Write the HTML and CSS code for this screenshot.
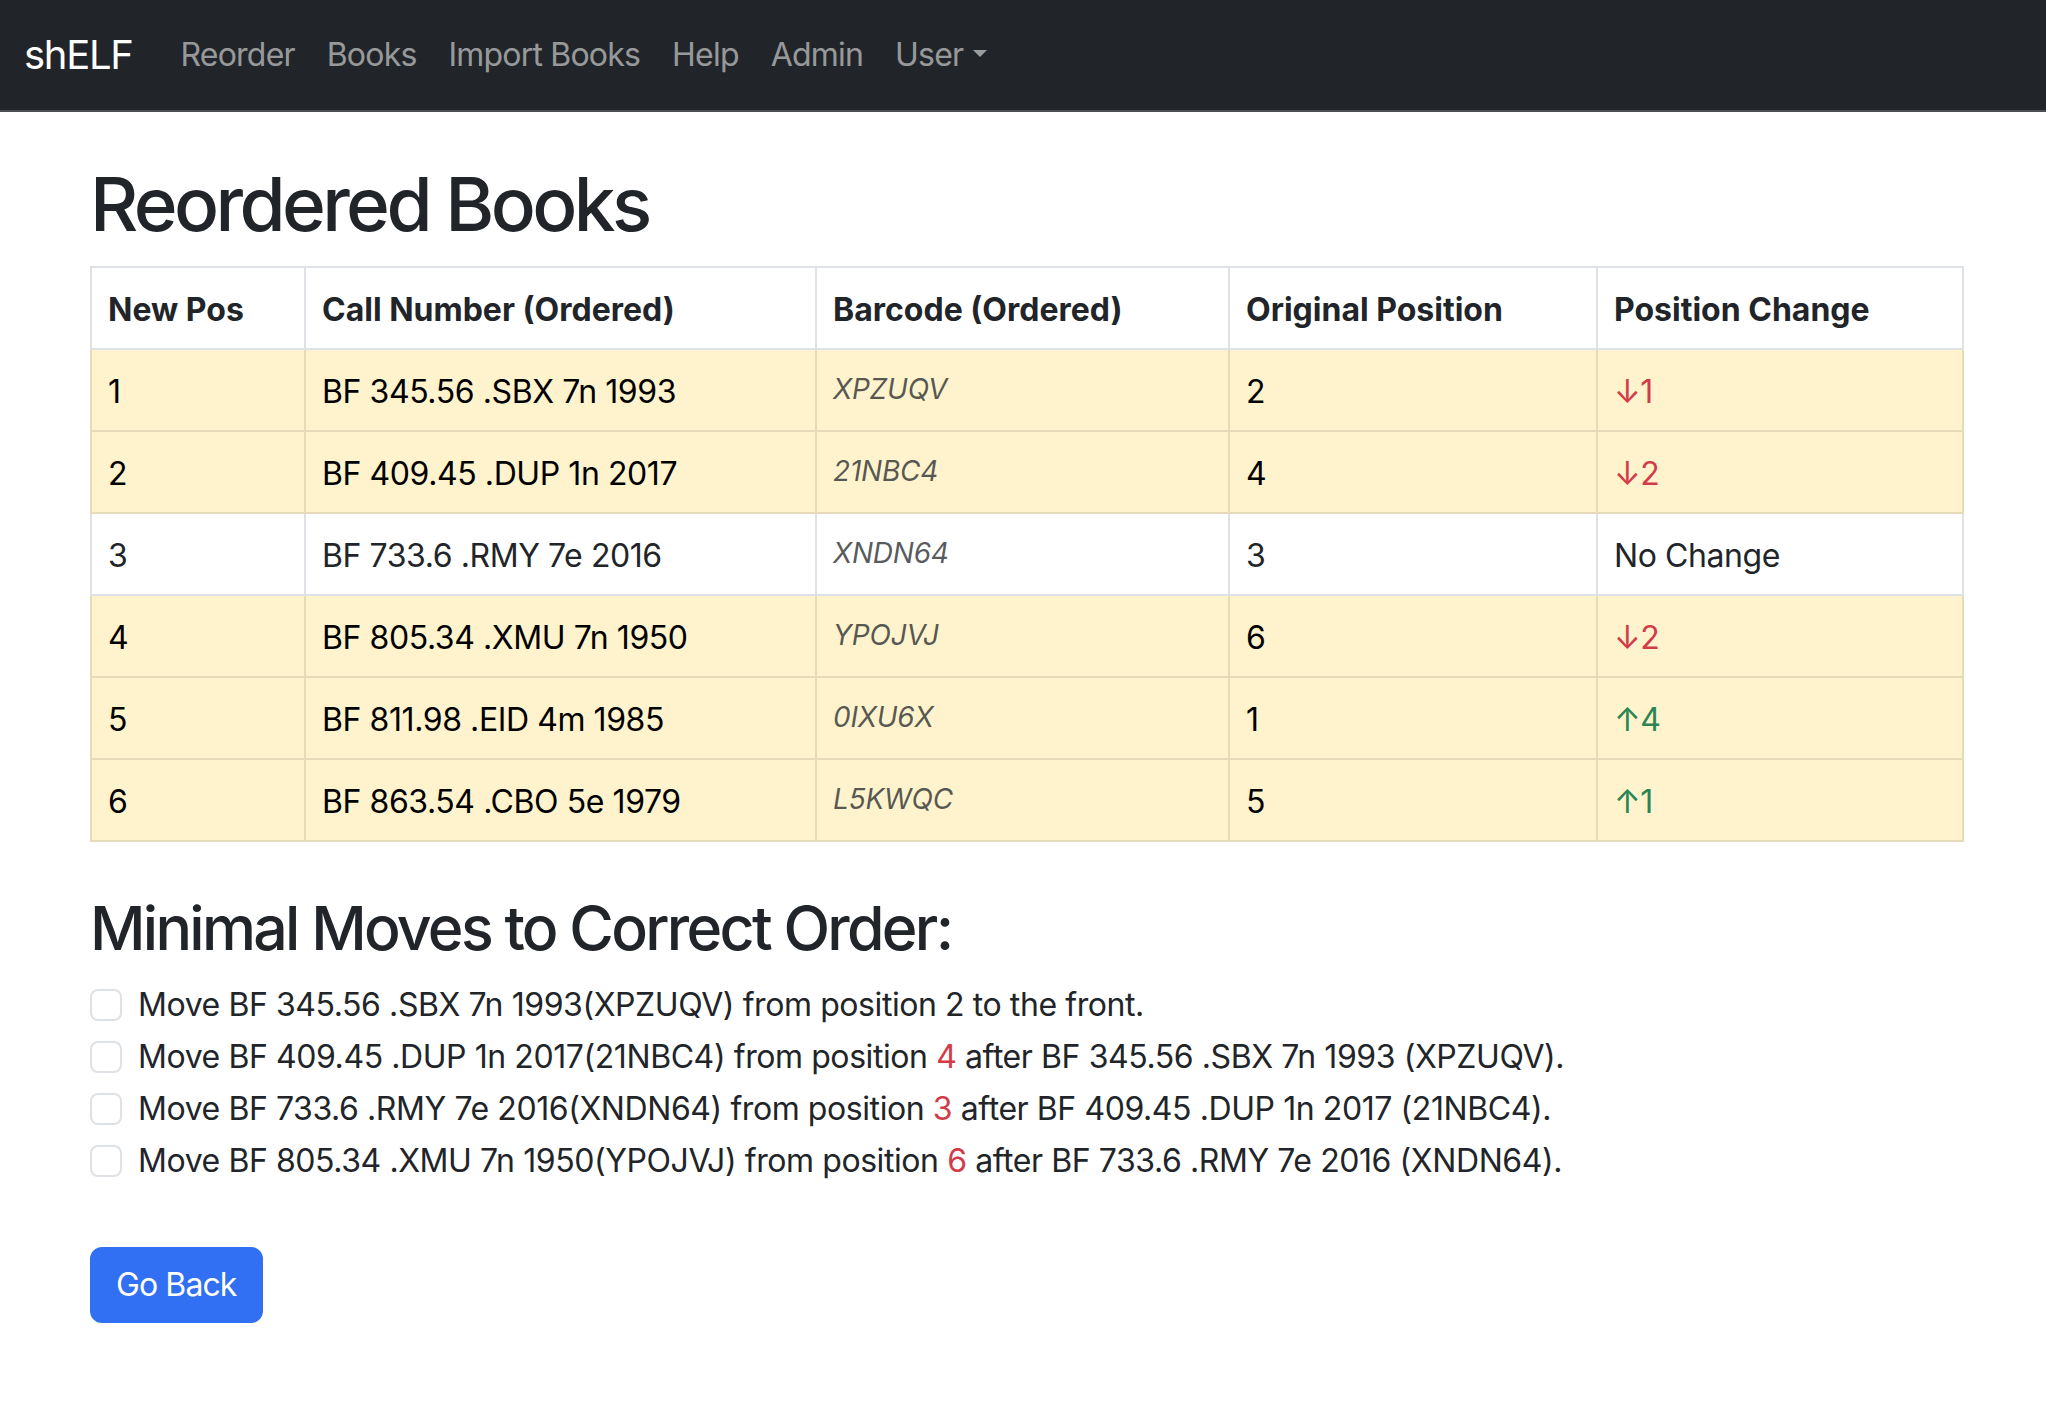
FILE: index.html
```html
<!DOCTYPE html>
<html lang="en">
<head>
<meta charset="utf-8">
<title>shELF - Reordered Books</title>
<link rel="stylesheet" href="styles.css">
</head>
<body>
<nav class="navbar">
  <div class="navbar-inner">
    <a class="brand" href="#">shELF</a>
    <ul class="nav">
      <li><a class="nav-link" href="#">Reorder</a></li>
      <li><a class="nav-link" href="#">Books</a></li>
      <li><a class="nav-link" href="#">Import Books</a></li>
      <li><a class="nav-link" href="#">Help</a></li>
      <li><a class="nav-link" href="#">Admin</a></li>
      <li><a class="nav-link dropdown-toggle" href="#">User</a></li>
    </ul>
  </div>
</nav>

<main class="container">
  <h1 class="title">Reordered Books</h1>
  <table class="table">
    <colgroup>
      <col class="col-pos">
      <col class="col-call">
      <col class="col-barcode">
      <col class="col-orig">
      <col class="col-change">
    </colgroup>
    <thead>
      <tr>
        <th>New Pos</th>
        <th>Call Number (Ordered)</th>
        <th>Barcode (Ordered)</th>
        <th>Original Position</th>
        <th>Position Change</th>
      </tr>
    </thead>
    <tbody>
      <tr class="row-warning">
        <td>1</td>
        <td>BF 345.56 .SBX 7n 1993</td>
        <td class="barcode"><em>XPZUQV</em></td>
        <td>2</td>
        <td><span class="text-danger">↓1</span></td>
      </tr>
      <tr class="row-warning">
        <td>2</td>
        <td>BF 409.45 .DUP 1n 2017</td>
        <td class="barcode"><em>21NBC4</em></td>
        <td>4</td>
        <td><span class="text-danger">↓2</span></td>
      </tr>
      <tr class="row-plain">
        <td>3</td>
        <td>BF 733.6 .RMY 7e 2016</td>
        <td class="barcode"><em>XNDN64</em></td>
        <td>3</td>
        <td>No Change</td>
      </tr>
      <tr class="row-warning">
        <td>4</td>
        <td>BF 805.34 .XMU 7n 1950</td>
        <td class="barcode"><em>YPOJVJ</em></td>
        <td>6</td>
        <td><span class="text-danger">↓2</span></td>
      </tr>
      <tr class="row-warning">
        <td>5</td>
        <td>BF 811.98 .EID 4m 1985</td>
        <td class="barcode"><em>0IXU6X</em></td>
        <td>1</td>
        <td><span class="text-success">↑4</span></td>
      </tr>
      <tr class="row-warning">
        <td>6</td>
        <td>BF 863.54 .CBO 5e 1979</td>
        <td class="barcode"><em>L5KWQC</em></td>
        <td>5</td>
        <td><span class="text-success">↑1</span></td>
      </tr>
    </tbody>
  </table>

  <h2 class="subtitle">Minimal Moves to Correct Order:</h2>
  <div class="moves">
    <div class="form-check">
      <input class="check-input" type="checkbox" id="m1">
      <label class="check-label" for="m1">Move BF 345.56 .SBX 7n 1993(XPZUQV) from position 2 to the front.</label>
    </div>
    <div class="form-check">
      <input class="check-input" type="checkbox" id="m2">
      <label class="check-label" for="m2">Move BF 409.45 .DUP 1n 2017(21NBC4) from position <span class="text-danger">4</span> after BF 345.56 .SBX 7n 1993 (XPZUQV).</label>
    </div>
    <div class="form-check">
      <input class="check-input" type="checkbox" id="m3">
      <label class="check-label" for="m3">Move BF 733.6 .RMY 7e 2016(XNDN64) from position <span class="text-danger">3</span> after BF 409.45 .DUP 1n 2017 (21NBC4).</label>
    </div>
    <div class="form-check">
      <input class="check-input" type="checkbox" id="m4">
      <label class="check-label" for="m4">Move BF 805.34 .XMU 7n 1950(YPOJVJ) from position <span class="text-danger">6</span> after BF 733.6 .RMY 7e 2016 (XNDN64).</label>
    </div>
  </div>

  <div class="actions">
    <a class="btn-primary" href="#">Go Back</a>
  </div>
</main>
</body>
</html>
```

FILE: styles.css
```css
html, body {
  margin: 0;
  padding: 0;
}

body {
  font-family: Inter, "Noto Sans", "Liberation Sans", sans-serif;
  font-size: 32px;
  line-height: 1.5;
  letter-spacing: -0.42px;
  color: #212529;
  background: #ffffff;
}

a {
  text-decoration: none;
}

/* Navbar */
.navbar {
  background: #212529;
  border-bottom: 2px solid #4b4e53;
  padding: 15px 0;
}

.navbar-inner {
  display: flex;
  align-items: center;
  padding: 0 24px;
}

.brand {
  color: #ffffff;
  font-size: 40px;
  line-height: 60px;
  letter-spacing: -1.3px;
  padding: 10px 0;
  margin-right: 32px;
}

.nav {
  display: flex;
  align-items: center;
  list-style: none;
  margin: 0;
  padding: 0;
}

.nav-link {
  display: block;
  padding: 16px;
  letter-spacing: -0.8px;
  color: rgba(255, 255, 255, 0.55);
}

.dropdown-toggle::after {
  content: "";
  display: inline-block;
  margin-left: 10px;
  vertical-align: 9px;
  border-top: 7px solid;
  border-left: 7px solid transparent;
  border-right: 7px solid transparent;
  border-bottom: 0;
}

/* Main container */
.container {
  width: 1872px;
  margin-left: 90px;
  padding-top: 48px;
}

.title {
  font-size: 74.7px;
  font-weight: 500;
  line-height: 1.2;
  letter-spacing: -3.6px;
  margin: 0 0 16px;
}

.subtitle {
  font-size: 60.8px;
  font-weight: 500;
  line-height: 1.2;
  letter-spacing: -2.7px;
  margin: 50px 0 16px;
}

/* Table */
.table {
  width: 1872px;
  table-layout: fixed;
  border-collapse: collapse;
  margin-bottom: 32px;
}

.col-pos { width: 214px; }
.col-call { width: 511px; }
.col-barcode { width: 413px; }
.col-orig { width: 368px; }
.col-change { width: 366px; }

.table th,
.table td {
  padding: 18px 16px 14px;
  text-align: left;
  vertical-align: top;
  border: 2px solid #dee2e6;
}

.table th {
  font-weight: 700;
  letter-spacing: 0;
}

.row-warning td {
  background: #fff3cd;
  border-color: #e6dbb9;
  color: #000000;
}

.row-plain td {
  color: #212529;
}

.table td.barcode {
  font-size: 28px;
  line-height: 42px;
  letter-spacing: -0.2px;
  color: rgba(33, 37, 41, 0.75);
}

.text-danger {
  color: #d13c49;
}

.text-success {
  color: #2a8552;
}

/* Moves */
.form-check {
  display: block;
  min-height: 48px;
  padding-left: 48px;
  margin-bottom: 4px;
}

.check-input {
  -webkit-appearance: none;
  appearance: none;
  float: left;
  width: 32px;
  height: 32px;
  margin: 8px 0 0 -48px;
  background: #ffffff;
  border: 2px solid #dee2e6;
  border-radius: 8px;
  box-sizing: border-box;
}

.actions {
  margin-top: 62px;
}

.btn-primary {
  display: inline-block;
  padding: 12px 24px;
  font-size: 32px;
  line-height: 48px;
  letter-spacing: -0.9px;
  color: #ffffff;
  background: #3170f2;
  border: 2px solid #3170f2;
  border-radius: 12px;
}
```
